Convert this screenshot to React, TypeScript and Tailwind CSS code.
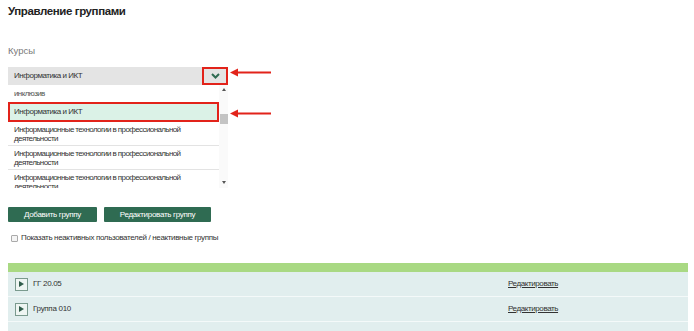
import React from "react";

const longName = "Информационные технологии в профессиональной деятельности";

const Arrow = ({ top }: { top: number }) => (
  <svg
    className="absolute left-[230px]"
    style={{ top }}
    width="42"
    height="9"
    viewBox="0 0 42 9"
  >
    <line x1="6" y1="4.5" x2="41" y2="4.5" stroke="#e2231a" strokeWidth="2" />
    <polygon points="0,4.5 8,0.5 8,8.5" fill="#e2231a" />
  </svg>
);

const GroupRow = ({ name }: { name: string }) => (
  <div className="flex h-[25px] items-center border-b border-[#f4f9f9] bg-[#e1eeee] text-[8px] tracking-[-0.3px] text-[#333]">
    <div className="ml-[7px] flex h-[13px] w-[13px] items-center justify-center border border-[#7a9a8e] bg-[#eef5f2]">
      <div className="h-0 w-0 border-y-[3.5px] border-l-[5px] border-y-transparent border-l-[#2f5c4a]" />
    </div>
    <span className="ml-[5px] w-[475px]">{name}</span>
    <span className="tracking-[-0.4px] underline">Редактировать</span>
  </div>
);

export default function App() {
  return (
    <div className="relative h-[331px] w-[694px] overflow-hidden bg-white font-['Liberation_Sans',Arial,sans-serif] text-[#333]">
      <div className="px-2 pt-[3px]">
        <h1 className="text-[11.5px] font-bold leading-[16px] tracking-[-0.4px] text-[#222]">Управление группами</h1>
        <div className="mt-[25px] text-[9.5px] leading-[14px] text-[#7a7a7a]">Курсы</div>

        <div className="mt-[9px] w-[220px]">
          <div className="flex h-[18px] items-center justify-between bg-[#e4e4e4] pl-[6px] text-[8px] tracking-[-0.45px]">
            <span>Информатика и ИКТ</span>
            <div className="flex h-[18px] w-[26px] items-center justify-center border-2 border-[#e2231a]">
              <svg width="9" height="6" viewBox="0 0 9 6">
                <polyline points="1,1 4.5,4.5 8,1" fill="none" stroke="#2f6b52" strokeWidth="2" />
              </svg>
            </div>
          </div>

          <div className="flex h-[103px] overflow-hidden bg-white">
            <div className="w-[211px] text-[8px] tracking-[-0.6px]">
              <div className="flex h-[17px] items-center pl-[6px] pt-[1px] text-[#555]">инклюзив</div>
              <div className="flex h-[20px] items-center border-2 border-[#e2231a] bg-[#dbf2e7] pl-[4px] tracking-[-0.45px]">
                Информатика и ИКТ
              </div>
              {[0, 1, 2].map((i) => (
                <div
                  key={i}
                  className="flex h-[24px] items-center border-b border-[#e3e3e3] pl-[6px] pr-[8px] leading-[9px]"
                >
                  {longName}
                </div>
              ))}
            </div>
            <div className="flex w-[9px] flex-col items-center bg-[#fafafa]">
              <div className="mt-[3px] h-0 w-0 border-x-[2.5px] border-b-[3px] border-x-transparent border-b-[#555]" />
              <div className="mt-[23px] h-[10px] w-[8px] bg-[#c4c4c4]" />
              <div className="mt-auto mb-[4px] h-0 w-0 border-x-[2.5px] border-t-[3px] border-x-transparent border-t-[#555]" />
            </div>
          </div>
        </div>

        <div className="mt-[19px] flex gap-[7px] text-[8px] tracking-[-0.3px] text-white">
          <button className="h-[15px] w-[89px] rounded-[1px] bg-[#2f6b52]">Добавить группу</button>
          <button className="h-[15px] w-[107px] rounded-[1px] bg-[#2f6b52]">Редактировать группу</button>
        </div>

        <div className="mt-[10px] flex h-[12px] items-center text-[8px] tracking-[-0.35px]">
          <div className="ml-[3px] h-[7px] w-[7px] rounded-[1px] border border-[#aaa] bg-[#f4f4f4]" />
          <span className="ml-[3px]">Показать неактивных пользователей / неактивные группы</span>
        </div>

        <div className="mt-[19px] w-[680px]">
          <div className="h-[9px] bg-[#a9d983]" />
          <GroupRow name="ГГ 20.05" />
          <GroupRow name="Группа 010" />
          <div className="h-[10px] bg-[#e1eeee]" />
        </div>
      </div>

      <Arrow top={68} />
      <Arrow top={109} />
    </div>
  );
}
